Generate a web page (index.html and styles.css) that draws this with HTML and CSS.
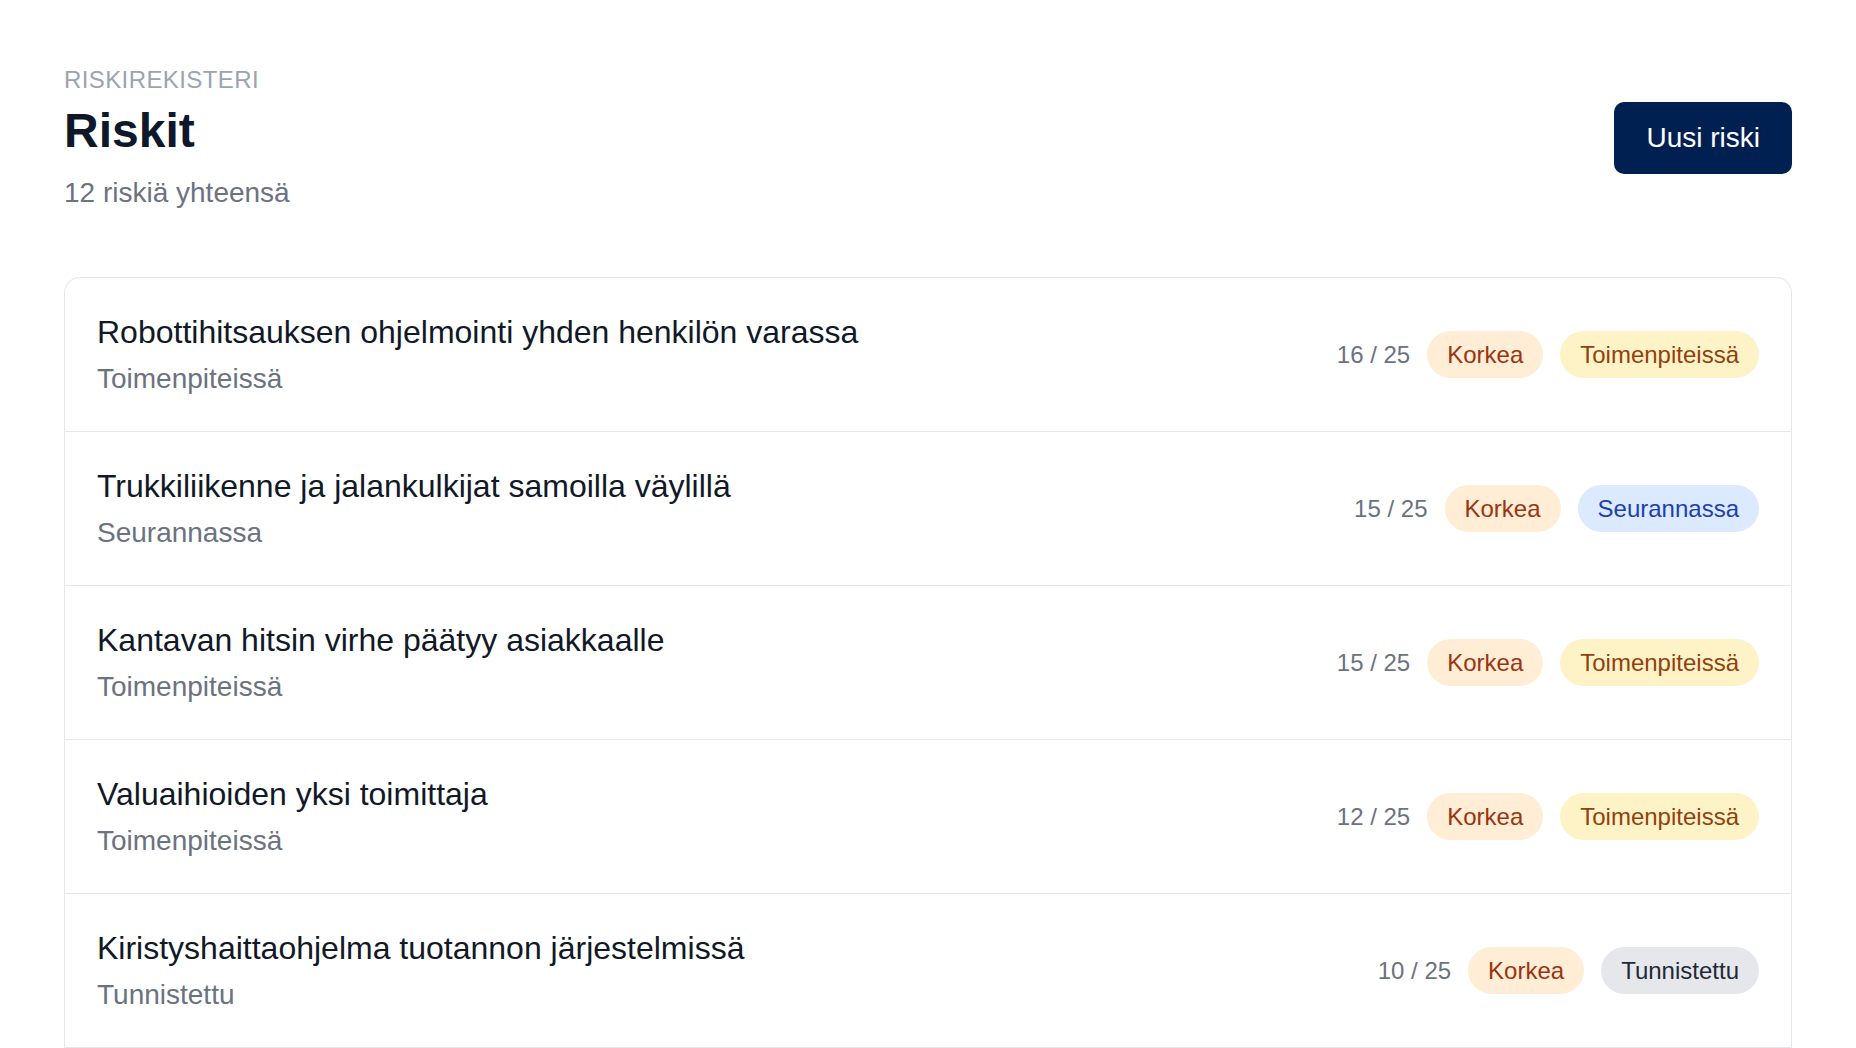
FILE: index.html
```html
<!DOCTYPE html>
<html lang="fi">
<head>
  <meta charset="UTF-8">
  <meta name="viewport" content="width=device-width, initial-scale=1.0">
  <title>Riskit</title>
  <link rel="stylesheet" href="styles.css">
</head>
<body>
  <div class="page">

    <!-- Otsikko -->
    <div class="header">
      <div class="header-text">
        <div class="eyebrow">Riskirekisteri</div>
        <h1>Riskit</h1>
        <p class="count">12 riskiä yhteensä</p>
      </div>
      <button type="button" class="new-button">Uusi riski</button>
    </div>

    <!-- Riskilista -->
    <div class="risk-list">
      <div class="risk-row">
        <div class="risk-info">
          <div class="risk-title">Robottihitsauksen ohjelmointi yhden henkilön varassa</div>
          <div class="risk-status">Toimenpiteissä</div>
        </div>
        <div class="risk-meta">
          <span class="score">16 / 25</span>
          <span class="badge badge-high">Korkea</span>
          <span class="badge badge-action">Toimenpiteissä</span>
        </div>
      </div>

      <div class="risk-row">
        <div class="risk-info">
          <div class="risk-title">Trukkiliikenne ja jalankulkijat samoilla väylillä</div>
          <div class="risk-status">Seurannassa</div>
        </div>
        <div class="risk-meta">
          <span class="score">15 / 25</span>
          <span class="badge badge-high">Korkea</span>
          <span class="badge badge-watch">Seurannassa</span>
        </div>
      </div>

      <div class="risk-row">
        <div class="risk-info">
          <div class="risk-title">Kantavan hitsin virhe päätyy asiakkaalle</div>
          <div class="risk-status">Toimenpiteissä</div>
        </div>
        <div class="risk-meta">
          <span class="score">15 / 25</span>
          <span class="badge badge-high">Korkea</span>
          <span class="badge badge-action">Toimenpiteissä</span>
        </div>
      </div>

      <div class="risk-row">
        <div class="risk-info">
          <div class="risk-title">Valuaihioiden yksi toimittaja</div>
          <div class="risk-status">Toimenpiteissä</div>
        </div>
        <div class="risk-meta">
          <span class="score">12 / 25</span>
          <span class="badge badge-high">Korkea</span>
          <span class="badge badge-action">Toimenpiteissä</span>
        </div>
      </div>

      <div class="risk-row">
        <div class="risk-info">
          <div class="risk-title">Kiristyshaittaohjelma tuotannon järjestelmissä</div>
          <div class="risk-status">Tunnistettu</div>
        </div>
        <div class="risk-meta">
          <span class="score">10 / 25</span>
          <span class="badge badge-high">Korkea</span>
          <span class="badge badge-new">Tunnistettu</span>
        </div>
      </div>
    </div>

  </div>
</body>
</html>
```

FILE: styles.css
```css
body {
  font-family: "Liberation Sans", Arial, sans-serif;
  margin: 0;
  padding: 0;
  background-color: #fff;
  color: #111827;
}

.page {
  padding: 63px 64px 0;
}

.header {
  display: flex;
  justify-content: space-between;
  align-items: center;
}

.eyebrow {
  font-size: 24px;
  line-height: 33px;
  text-transform: uppercase;
  letter-spacing: 0.4px;
  color: #9ca3af;
}

h1 {
  margin: 6px 0 0;
  font-size: 48px;
  line-height: 58px;
  font-weight: 700;
  color: #0f172a;
}

.count {
  margin: 12px 0 0;
  font-size: 28px;
  line-height: 41px;
  color: #6b7280;
}

.new-button {
  padding: 15px 32px;
  background-color: #002052;
  border: none;
  border-radius: 10px;
  font-family: inherit;
  font-size: 28px;
  line-height: 42px;
  color: #fff;
  cursor: pointer;
}

.new-button:hover {
  background-color: #00163a;
}

.risk-list {
  margin-top: 64px;
  border: 1px solid #e5e7eb;
  border-bottom: none;
  border-radius: 16px 16px 0 0;
}

.risk-row {
  display: flex;
  justify-content: space-between;
  align-items: center;
  padding: 32px;
  border-bottom: 1px solid #e5e7eb;
}

.risk-title {
  font-size: 32px;
  line-height: 45px;
  color: #111827;
}

.risk-status {
  margin-top: 4px;
  font-size: 28px;
  line-height: 40px;
  color: #6b7280;
}

.risk-meta {
  display: flex;
  align-items: center;
  gap: 17px;
}

.score {
  font-size: 24px;
  color: #6b7280;
}

.badge {
  padding: 7px 20px;
  border-radius: 999px;
  font-size: 24px;
  line-height: 33px;
}

.badge-high {
  background-color: #ffedd5;
  color: #9a3412;
}

.badge-action {
  background-color: #fef3c7;
  color: #92400e;
}

.badge-watch {
  background-color: #dbeafe;
  color: #1e40af;
}

.badge-new {
  background-color: #e5e7eb;
  color: #1f2937;
}
```
